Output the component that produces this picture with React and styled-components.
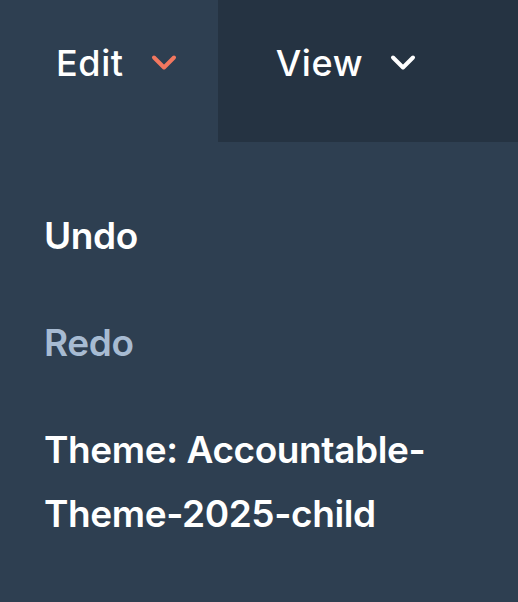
import React from "react";
import styled, { createGlobalStyle } from "styled-components";

const Global = createGlobalStyle`
  html, body {
    margin: 0;
    padding: 0;
    background: #2e3f51;
  }
  body {
    font-family: "Inter", "Lato", "Liberation Sans", sans-serif;
    -webkit-font-smoothing: antialiased;
  }
`;

const tabs = [
  { label: "Edit", open: true },
  { label: "View" },
  { label: "Insert" },
];

const items = [
  { label: "Undo" },
  { label: "Redo", disabled: true },
  { label: "Theme: Accountable-Theme-2025-child" },
];

export default function App() {
  return (
    <>
      <Global />
      <Page>
        <MenuBar>
          {tabs.map((t) => (
            <Tab key={t.label} $open={t.open}>
              <TabLabel>{t.label}</TabLabel>
              <Chevron $open={t.open} viewBox="0 0 26 18" aria-hidden="true">
                <path d="M3 3.5 L13 13.5 L23 3.5" />
              </Chevron>
            </Tab>
          ))}
        </MenuBar>

        {/* Edit dropdown */}
        <Dropdown>
          {items.map((it) => (
            <Item key={it.label} $disabled={it.disabled}>
              {it.label}
            </Item>
          ))}
        </Dropdown>
      </Page>
    </>
  );
}

const Page = styled.div`
  min-height: 100vh;
  background: #2e3f51;
  overflow: hidden;
`;

const MenuBar = styled.div`
  display: flex;
  height: 142px;
  background: #253342;
  white-space: nowrap;
`;

const Tab = styled.div`
  display: flex;
  align-items: center;
  gap: 27px;
  padding: 0 41px 16px 56px;
  flex-shrink: 0;
  background: ${(p) => (p.$open ? "#2e3f51" : "transparent")};
  &:nth-child(2) {
    padding-left: 58px;
  }
  &:nth-child(3) {
    padding-left: 60px;
  }
`;

const TabLabel = styled.span`
  color: #ffffff;
  font-size: 36px;
  font-weight: 500;
  letter-spacing: 0.6px;
`;

const Chevron = styled.svg`
  width: 26px;
  height: 18px;
  fill: none;
  stroke: ${(p) => (p.$open ? "#f2775f" : "#ffffff")};
  stroke-width: 4;
  stroke-linecap: round;
  stroke-linejoin: round;
`;

const Dropdown = styled.div`
  display: flex;
  flex-direction: column;
  gap: 43px;
  padding: 62px 60px 0 44px;
  max-width: 420px;
`;

const Item = styled.div`
  color: ${(p) => (p.$disabled ? "#a7bbd2" : "#ffffff")};
  font-size: 37px;
  font-weight: 600;
  line-height: 64px;
  letter-spacing: -0.4px;
`;
